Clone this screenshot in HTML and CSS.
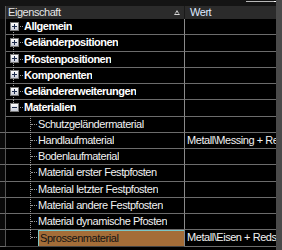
FILE: index.html
```html
<!DOCTYPE html>
<html>
<head>
<meta charset="utf-8">
<link rel="stylesheet" href="styles.css">
</head>
<body>
<div class="screen">
  <div class="panel">
    <div class="topbar"><span class="slider"></span></div>
    <div class="hdr">
      <div class="gut"></div>
      <div class="hname">Eigenschaft<span class="sort"></span></div>
      <div class="hval">Wert</div>
    </div>
    <div class="row group first">
      <div class="gut"></div>
      <div class="name"><span class="exp"><span class="box plus"></span></span><span class="lbl">Allgemein</span></div>
      <div class="val"></div>
    </div>
    <div class="row group">
      <div class="gut"></div>
      <div class="name"><span class="exp"><span class="box plus"></span></span><span class="lbl">Geländerpositionen</span></div>
      <div class="val"></div>
    </div>
    <div class="row group">
      <div class="gut"></div>
      <div class="name"><span class="exp"><span class="box plus"></span></span><span class="lbl">Pfostenpositionen</span></div>
      <div class="val"></div>
    </div>
    <div class="row group">
      <div class="gut"></div>
      <div class="name"><span class="exp"><span class="box plus"></span></span><span class="lbl">Komponenten</span></div>
      <div class="val"></div>
    </div>
    <div class="row group">
      <div class="gut"></div>
      <div class="name"><span class="exp"><span class="box plus"></span></span><span class="lbl">Geländererweiterungen</span></div>
      <div class="val"></div>
    </div>
    <div class="row group last open">
      <div class="gut"></div>
      <div class="name"><span class="exp"><span class="box"></span></span><span class="lbl">Materialien</span></div>
      <div class="val"></div>
    </div>
    <div class="row child">
      <div class="gut"></div>
      <div class="name"><span class="ind"></span><span class="lbl">Schutzgeländermaterial</span></div>
      <div class="val"></div>
    </div>
    <div class="row child">
      <div class="gut"></div>
      <div class="name"><span class="ind"></span><span class="lbl">Handlaufmaterial</span></div>
      <div class="val">Metall\Messing + Red</div>
    </div>
    <div class="row child">
      <div class="gut"></div>
      <div class="name"><span class="ind"></span><span class="lbl">Bodenlaufmaterial</span></div>
      <div class="val"></div>
    </div>
    <div class="row child">
      <div class="gut"></div>
      <div class="name"><span class="ind"></span><span class="lbl">Material erster Festpfosten</span></div>
      <div class="val"></div>
    </div>
    <div class="row child">
      <div class="gut"></div>
      <div class="name"><span class="ind"></span><span class="lbl">Material letzter Festpfosten</span></div>
      <div class="val"></div>
    </div>
    <div class="row child">
      <div class="gut"></div>
      <div class="name"><span class="ind"></span><span class="lbl">Material andere Festpfosten</span></div>
      <div class="val"></div>
    </div>
    <div class="row child">
      <div class="gut"></div>
      <div class="name"><span class="ind"></span><span class="lbl">Material dynamische Pfosten</span></div>
      <div class="val"></div>
    </div>
    <div class="row child lastchild sel">
      <div class="gut"></div>
      <div class="name"><span class="ind"></span><span class="lbl">Sprossenmaterial</span></div>
      <div class="val">Metall\Eisen + Redsdl</div>
    </div>
  </div>
  <div class="rail"></div>
</div>
</body>
</html>
```

FILE: styles.css
```css
html, body {
  margin: 0;
  padding: 0;
  background: #000;
}
body {
  font-family: "Liberation Sans", Arial, sans-serif;
  font-size: 11px;
  letter-spacing: -0.45px;
  color: #f2f2f2;
  width: 282px;
  height: 250px;
  overflow: hidden;
}
.screen {
  display: flex;
  height: 250px;
}
.panel {
  width: 276px;
  display: flex;
  flex-direction: column;
  overflow: hidden;
}
.rail {
  width: 6px;
  background: #4a4a4a;
}
.topbar {
  height: 6px;
  background: #141414;
  display: flex;
  justify-content: flex-end;
}
.slider {
  width: 28px;
  height: 1px;
  margin-top: 1px;
  background: #b8b8b8;
  border-right: 2px solid #fff;
}
.hdr {
  display: flex;
  height: 13px;
  background: #2b2b2b;
  color: #e6e6e6;
  line-height: 13px;
}
.hdr .gut {
  width: 5px;
  background: #141414;
  border-right: 1px solid #5a5a5a;
}
.hname {
  width: 179px;
  padding-left: 2px;
  box-sizing: border-box;
  border-right: 1px solid #1a1a1a;
  display: flex;
  align-items: center;
  justify-content: space-between;
  padding-right: 4px;
}
.sort {
  width: 0;
  height: 0;
  border-left: 3px solid transparent;
  border-right: 3px solid transparent;
  border-bottom: 5px solid #d8d8d8;
  position: relative;
}
.sort::after {
  content: "";
  position: absolute;
  left: -2px;
  top: 2px;
  width: 0;
  height: 0;
  border-left: 2px solid transparent;
  border-right: 2px solid transparent;
  border-bottom: 2px solid #2b2b2b;
}
.hval {
  flex: 1;
  padding-left: 5px;
  color: #dfe8ff;
}
.row {
  display: flex;
  height: 16.25px;
  box-sizing: border-box;
}
.row .gut {
  width: 5px;
  background: #0a0a0a;
  border-right: 1px solid #555;
}
.row.child .gut {
  border-bottom: 1px solid #6c6c6c;
}
.name {
  width: 179px;
  box-sizing: border-box;
  border-right: 1px solid #8a8a8a;
  border-bottom: 1px solid #6c6c6c;
  display: flex;
  align-items: stretch;
}
.val {
  flex: 1;
  border-bottom: 1px solid #6c6c6c;
  padding-left: 2px;
  white-space: nowrap;
  overflow: hidden;
  line-height: 15px;
}
.lbl {
  line-height: 15px;
  white-space: nowrap;
  overflow: hidden;
}
.group .lbl {
  font-weight: bold;
  color: #fff;
  letter-spacing: -0.5px;
}
.exp {
  width: 18px;
  position: relative;
  display: flex;
  align-items: center;
}
.exp::before {
  content: "";
  position: absolute;
  left: 7px;
  top: -1px;
  bottom: -1px;
  border-left: 1px dotted #9a9a9a;
}
.first .exp::before { top: 7px; }
.last .exp::before { bottom: 7px; }
.exp::after {
  content: "";
  position: absolute;
  left: 11px;
  width: 6px;
  top: 7px;
  border-top: 1px dotted #9a9a9a;
}
.box {
  position: relative;
  z-index: 1;
  margin-left: 4px;
  width: 7px;
  height: 7px;
  background: linear-gradient(#ffffff, #c8ccd8);
  border: 1px solid #7a7a7a;
  box-sizing: content-box;
  margin-top: -1px;
}
.box::before {
  content: "";
  position: absolute;
  left: 1px;
  top: 3px;
  width: 5px;
  height: 1px;
  background: #1c2a4a;
}
.box.plus::after {
  content: "";
  position: absolute;
  left: 3px;
  top: 1px;
  width: 1px;
  height: 5px;
  background: #1c2a4a;
}
.ind {
  width: 32px;
  flex: none;
  position: relative;
}
.ind::before {
  content: "";
  position: absolute;
  left: 24px;
  top: -1px;
  bottom: -1px;
  border-left: 1px dotted #9a9a9a;
}
.lastchild .ind::before { bottom: 7px; }
.ind::after {
  content: "";
  position: absolute;
  left: 25px;
  width: 6px;
  top: 7px;
  border-top: 1px dotted #9a9a9a;
}
.sel .lbl {
  flex: 1;
  background: #a46d38;
  color: #141414;
  border-top: 1px solid #7cc6c6;
  border-left: 1px solid #7cc6c6;
  line-height: 14px;
  padding-left: 1px;
}
.sel .name {
  border-bottom-color: #444;
}
```
